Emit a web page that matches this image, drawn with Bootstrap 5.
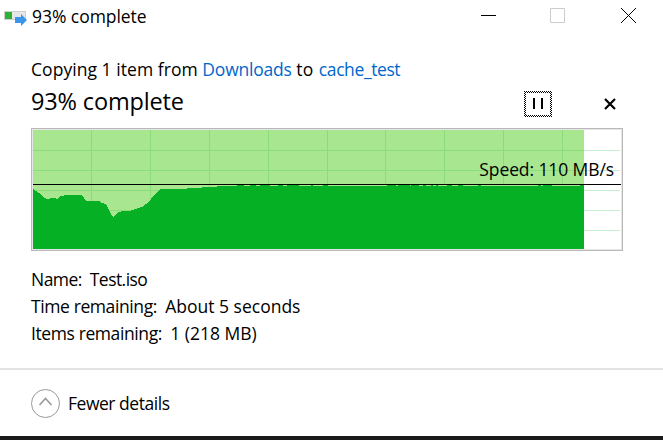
<!DOCTYPE html>
<html lang="en">
    <head>
        <meta charset="UTF-8">
        <title>93% complete</title>
        <link rel="stylesheet" href="https://cdn.jsdelivr.net/npm/bootstrap@5.3.3/dist/css/bootstrap.min.css">
        <style>body {
    background-color: #fff;
    color: #000;
    font-family: 'Open Sans', 'Noto Sans', sans-serif;
    font-size: 17.5px;
    line-height: 27px;
    overflow: hidden;
}

.copy-window {
    height: 440px;
    border-bottom: 4px solid #1a1a1a;
}

.title-bar {
    height: 56px;
    padding-left: 4px;
}

.title-bar span {
    margin: 3px 0 0 5px;
    letter-spacing: -0.05px;
}

.win-btn {
    width: 70px;
    height: 31px;
}

.copy-body {
    padding: 0 40px 0 31px;
    height: 312px;
}

.copy-line {
    letter-spacing: 0.05px;
}

.copy-line a {
    color: #0066cc;
    letter-spacing: -0.2px;
}

.copy-line a + a {
    letter-spacing: -0.4px;
    margin-left: 1px;
}

.percent {
    font-size: 23.5px;
    line-height: 36px;
    height: 45px;
    letter-spacing: -0.15px;
}

.pause-btn {
    width: 28px;
    height: 26px;
    margin: 8px 51px 0 0;
}

.cancel-btn {
    width: 14px;
    height: 14px;
    margin: 14px 6px 0 0;
}

.speed-graph {
    width: 592px;
    height: 123px;
    border: 1px solid #b9b9b9;
    margin-bottom: 15px;
}

.speed-label {
    top: 27px;
    right: 8px;
    letter-spacing: -0.1px;
}

.details {
    letter-spacing: -0.4px;
}

.details b {
    font-weight: normal;
    letter-spacing: 0;
}

.details .item-name {
    letter-spacing: -0.55px;
}

.bottom-bar {
    border-top: 2px solid #e3e3e3;
    height: 68px;
    padding-left: 31px;
}

.bottom-bar span {
    margin-left: 8px;
    letter-spacing: -0.47px;
}</style>
    </head>
    <body>
        <div class="copy-window d-flex flex-column">
            <div class="title-bar d-flex align-items-start">
                <svg class="mt-2" width="23" height="18" viewBox="0 8 23 18">
                    <rect x="0.5" y="11.5" width="21" height="8" fill="#e6e6e6" stroke="#cfcfcf"/>
                    <rect x="1" y="12" width="7" height="7" fill="#2eb135"/>
                    <path d="M11 17h6v-3l6 6-6 6v-3h-6z" fill="#3a96e8"/>
                </svg>
                <span>93% complete</span>
                <div class="d-flex ms-auto">
                    <svg class="win-btn" viewBox="0 0 70 31"><path d="M28 15.5h15" stroke="#000"/></svg>
                    <svg class="win-btn" viewBox="0 0 70 31"><path d="M27.5 8.5h14v14h-14z" fill="none" stroke="#ccc"/></svg>
                    <svg class="win-btn" viewBox="0 0 70 31"><path d="M28 8l15 15M43 8L28 23" stroke="#000"/></svg>
                </div>
            </div>
            <div class="copy-body">
                <div class="copy-line"><span>Copying 1 item from <a class="text-decoration-none" href="#">Downloads</a> to <a class="text-decoration-none" href="#">cache_test</a></span></div>
                <div class="d-flex align-items-start">
                    <div class="percent me-auto">93% complete</div>
                    <svg class="pause-btn" viewBox="0 0 28 26">
                        <!-- checkered two pixel focus border -->
                        <g stroke="#000" stroke-dasharray="1 1">
                            <path d="M0 .5h28M0 24.500h28M.5 2v22M26.500 2v22"/>
                            <path d="M1 1.500h27M1 25.500h27M1.500 3v21M27.500 3v21"/>
                        </g>
                        <path d="M10 7v11M18 7v11" stroke="#000" stroke-width="2"/>
                    </svg>
                    <svg class="cancel-btn" viewBox="0 0 14 14"><path d="M2 2l10 10M12 2L2 12" stroke="#000" stroke-width="2.2"/></svg>
                </div>
                <div class="speed-graph position-relative">
                    <svg class="d-block" width="590" height="121" viewBox="32 129 590 121" shape-rendering="crispEdges">
                        <rect x="32.5" y="129.5" width="589" height="120" fill="#fff" stroke="#e6e6e6"/>
                        <path d="M33 150.5h587M33 170.5h587M33 190.5h587M33 210.5h587M33 230.5h587" stroke="#c8f0d0"/>
                        <rect x="33" y="130" width="551" height="119" fill="#a8e690"/>
                        <path d="M33 150.5h551M33 170.5h551M33 190.5h551M33 210.5h551M91.5 130v119M150.5 130v119M209.5 130v119M268.5 130v119M327.5 130v119M385.5 130v119M444.5 130v119M503.5 130v119M562.5 130v119" stroke="#8bdd7c"/>
                        <path d="M33 189l2 1.500 4 2.500 4 4 4 2h2l1-1h5l1 1 2-.5 2-2.500 7-1 4-.5 11 .5 4 6h13l3 2 4 1 5 10 2 3 4-4 5-2 9-.5 4-1.500 7-2 7-5 2-3 9-10h27v-1h15v-1h15v-1h13v-1h354v64H33z" fill="#06b025"/>
                        <path d="M230 185.500h7m7 0h6m6 0h4m10 0h8m5 0h4m12 0h12m2 0h10m5 0h59m9 0h2m12 0h1m8 0h4m3 0h5m2 0h3m2 0h9m5 0h6m5 0h15m3 0h57m3 0h2m9 0h28" stroke="#a8e690"/>
                        <path d="M33 184.500h588" stroke="#000"/>
                    </svg>
                    <span class="speed-label position-absolute">Speed: 110 MB/s</span>
                </div>
                <div class="details">
                    <div class="item-name"><span>Name:&nbsp; Test.iso</span></div>
                    <div><span>Time remaining:&nbsp; <b>About 5 seconds</b></span></div>
                    <div><span>Items remaining:&nbsp; <b>1 (218 MB)</b></span></div>
                </div>
            </div>
            <div class="bottom-bar d-flex align-items-center">
                <svg width="29" height="29" viewBox="0 0 29 29" fill="none" stroke="#999">
                    <circle cx="14.5" cy="14.5" r="14"/>
                    <path d="M8.500 16l6-6.500 6 6.500" stroke-width="1.600"/>
                </svg>
                <span>Fewer details</span>
            </div>
        </div>
        <script src="https://cdn.jsdelivr.net/npm/bootstrap@5.3.3/dist/js/bootstrap.bundle.min.js"></script>
    </body>
</html>
